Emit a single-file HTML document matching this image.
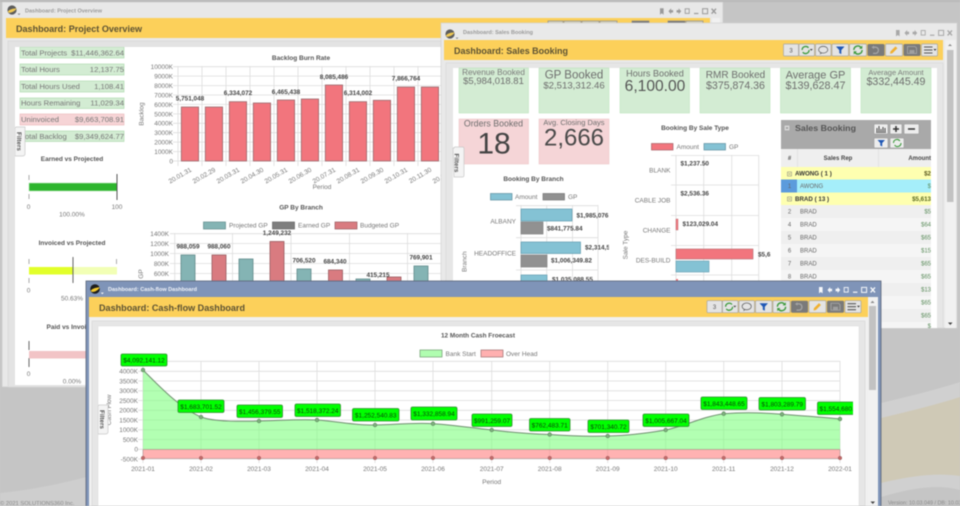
<!DOCTYPE html>
<html><head><meta charset="utf-8"><title>Dashboards</title>
<style>
html,body{margin:0;padding:0;width:960px;height:506px;overflow:hidden;background:#c6c6c6}
svg{display:block;filter:blur(.4px)}
text{font-family:"Liberation Sans",sans-serif}
.t{font-size:6.5px;fill:#777}
.r{text-anchor:end}
.m{text-anchor:middle}
.b{font-size:6.4px;font-weight:bold;fill:#444}
.h{font-size:6.5px;font-weight:bold;fill:#555;text-anchor:middle}
.g{stroke:#ddd;stroke-width:.8;fill:none}
.bt{font-size:5.6px;font-weight:bold}
.y{font-size:9.6px;font-weight:bold;fill:#5c5233}
.c{fill:#6e6e6e;text-anchor:middle}
.gl{fill:#00ff00;stroke:#2f8f2f;stroke-width:.8}
.gt{font-size:6.5px;fill:#0a4a0a;text-anchor:middle}
.st{font-size:7.7px;fill:#777}
.rw{font-size:6px;fill:#666}
.val{font-size:6px;fill:#5f8f5f;text-anchor:end}
</style></head>
<body>
<svg width="960" height="506" viewBox="0 0 960 506" xmlns="http://www.w3.org/2000/svg">
<defs>
<clipPath id="c1"><rect x="15" y="47" width="426" height="338"/></clipPath>
<clipPath id="c2a"><rect x="453" y="68" width="156" height="214"/></clipPath>
<clipPath id="c2b"><rect x="612" y="120" width="159" height="162"/></clipPath>
<clipPath id="c2g"><rect x="781" y="120" width="150" height="208"/></clipPath>
<clipPath id="c3l"><rect x="98" y="326" width="755" height="180"/></clipPath>
<g id="logo">
<circle cx="5" cy="5" r="4.6" fill="#3a3a3a"/>
<path d="M.8 6.6C3 4 6 3.6 9.6 3.4 8.4 5.8 4.5 8.2 1.6 7.6Z" fill="#f2c230"/>
<path d="M10.5 8.5h3l-1.5 1.6z" fill="#777"/>
</g>
<g id="tb">
<rect x="0" y="0" width="15" height="12" rx="1" fill="#e4e4e4" stroke="#a5a5a5" stroke-width=".7"/>
<text x="7.5" y="8.3" font-size="6" fill="#555" text-anchor="middle">3</text>
<rect x="15.5" y="0" width="15.5" height="12" rx="1" fill="#e4e4e4" stroke="#a5a5a5" stroke-width=".7"/>
<path d="M18.6 6a3.6 3.6 0 0 1 6.4-2.2M25.6 6a3.6 3.6 0 0 1-6.4 2.2" fill="none" stroke="#3d9a3d" stroke-width="1.3"/>
<path d="M26.3 5h3l-1.5 1.8z" fill="#444"/>
<rect x="32" y="0" width="15.5" height="12" rx="1" fill="#e4e4e4" stroke="#a5a5a5" stroke-width=".7"/>
<ellipse cx="39.7" cy="5.7" rx="4.6" ry="3.4" fill="none" stroke="#666" stroke-width=".8"/>
<path d="M37 8.5l-.8 2 2.5-1.4z" fill="#666"/>
<rect x="48.5" y="0" width="16.5" height="12" rx="1" fill="#e4e4e4" stroke="#a5a5a5" stroke-width=".7"/>
<path d="M52.5 2.5h8.5l-3.2 3.6v4l-2-1v-3z" fill="#1f57b5"/>
<rect x="66" y="0" width="17" height="12" rx="1" fill="#e4e4e4" stroke="#a5a5a5" stroke-width=".7"/>
<path d="M70.4 6a4 4 0 0 1 7.2-2.4M78.6 6a4 4 0 0 1-7.2 2.4" fill="none" stroke="#3d9a3d" stroke-width="1.4"/>
<path d="M78.8 1.5v3.2h-3.2zM70.2 10.5V7.3h3.2z" fill="#3d9a3d"/>
<rect x="84" y="0" width="17" height="12" rx="1.5" fill="#7a7a7a"/>
<path d="M90 3.2h2.5a3.2 3.2 0 0 1 0 6.2H89.5" fill="none" stroke="#a5a5a5" stroke-width="1.3"/>
<path d="M90.5 1.5v3.6L88 3.3z" fill="#a5a5a5"/>
<rect x="102" y="0" width="17" height="12" rx="1" fill="#e4e4e4" stroke="#a5a5a5" stroke-width=".7"/>
<path d="M106.5 9.8l.5-2.4 5-5 1.9 1.9-5 5z" fill="#f0b030"/>
<rect x="120" y="0" width="17" height="12" rx="1.5" fill="#7a7a7a"/>
<path d="M124 2.5h7.5l1.5 1.5v5.5h-9z" fill="none" stroke="#a0a0a0" stroke-width="1"/>
<rect x="126" y="6" width="5" height="3.5" fill="#a0a0a0"/>
<rect x="138" y="0" width="16" height="12" rx="1" fill="#e4e4e4" stroke="#a5a5a5" stroke-width=".7"/>
<path d="M140.5 3h8.5M140.5 6h8.5M140.5 9h8.5" stroke="#555" stroke-width="1.1"/>
<path d="M150 5h3l-1.5 1.8z" fill="#333"/>
</g>
<g id="wi">
<path d="M0 -3h3.6v6.4L1.8 2 0 3.4z"/>
<path d="M8.5 0l2.6-3v1.8h2v2.4h-2V3z"/>
<path d="M21.2 0l-2.6-3v1.8h-2v2.4h2V3z" transform="translate(0 0)"/>
<rect x="25.2" y="-2.5" width="4" height="4.6" fill="none" stroke-width=".9" style="stroke:inherit"/>
<rect x="34" y="1.6" width="4.4" height="1.2"/>
<rect x="42.6" y="-2.6" width="5" height="5" fill="none" stroke-width="1" style="stroke:inherit"/>
<path d="M51.6 -2.6l4.4 5M56 -2.6l-4.4 5" stroke-width="1.4" style="stroke:inherit"/>
</g>
</defs>

<!-- background -->
<rect width="960" height="506" fill="#c5c5c5"/>
<path d="M881 403C910 396 935 390 960 382V490C935 483 905 490 881 497Z" fill="#d0d0d0"/>
<path d="M881 418C910 411 935 405 960 397V476C935 472 905 477 881 483Z" fill="#cfc9b6"/>
<path d="M0 493C30 490 60 484 86 477V506H0Z" fill="#cecece"/>
<rect x="0" y="0" width="960" height="2" fill="#b9b9b9"/>
<text x="0" y="505" font-size="5.8" fill="#8a8a8a">© 2021 SOLUTIONS360 Inc.</text>
<text x="888" y="504.5" font-size="5.4" fill="#8a8a8a">Version: 10.03.049 / DB: 10.03.049</text>

<!-- WINDOW 1 -->
<rect x="2" y="2" width="721" height="385" fill="#e8e8e8" stroke="#c9c9c9" stroke-width=".6"/>
<use href="#logo" x="7" y="5" opacity=".8"/>
<text x="25" y="12.3" class="bt" fill="#9b9b9b" textLength="77" lengthAdjust="spacingAndGlyphs">Dashboard: Project Overview</text>
<g fill="#9a9a9a" stroke="#9a9a9a" stroke-width="0" transform="translate(660 11.3)"><use href="#wi"/></g>
<rect x="6" y="18" width="704" height="20" fill="#fcd05a"/>
<text x="16" y="32" class="y" textLength="126" lengthAdjust="spacingAndGlyphs">Dashboard: Project Overview</text>
<g fill="#d4d0bb" stroke="#8b8b8b" stroke-width=".7">
<rect x="548" y="21" width="15" height="6"/><rect x="564" y="21" width="17" height="6"/><rect x="582" y="21" width="17" height="6"/><rect x="600" y="21" width="17" height="6"/>
<rect x="632" y="21" width="17" height="6"/><rect x="668" y="21" width="17" height="6"/><rect x="686" y="21" width="17" height="6"/>
</g>
<rect x="632" y="21" width="17" height="6" fill="#7a7a7a"/><rect x="668" y="21" width="17" height="6" fill="#7a7a7a"/>
<rect x="712" y="18" width="8" height="8" fill="#f1f1f1"/>
<rect x="8" y="41" width="433" height="346" fill="#e3e3e3" stroke="#d6d6d6" stroke-width=".7"/>
<rect x="15" y="47" width="426" height="338" fill="#fff"/>
<g clip-path="url(#c1)">
<g fill="#d3ecd3" stroke="#a9d8a9" stroke-width=".6">
<rect x="20" y="47" width="104" height="11"/><rect x="20" y="64" width="104" height="11"/><rect x="20" y="81" width="104" height="11"/><rect x="20" y="98" width="104" height="10.5"/><rect x="20" y="131" width="104" height="10.5"/>
</g>
<rect x="20" y="114" width="104" height="11" fill="#f6d4d6" stroke="#eab6b8" stroke-width=".6"/>
<text x="21" y="55.5" class="st">Total Projects</text><text x="124" y="55.5" class="st r">$11,446,362.64</text>
<text x="21" y="72" class="st">Total Hours</text><text x="124" y="72" class="st r">12,137.75</text>
<text x="21" y="89" class="st">Total Hours Used</text><text x="124" y="89" class="st r">1,108.41</text>
<text x="21" y="105.5" class="st">Hours Remaining</text><text x="124" y="105.5" class="st r">11,029.34</text>
<text x="21" y="122" class="st">Uninvoiced</text><text x="124" y="122" class="st r">$9,663,708.91</text>
<text x="21" y="139" class="st">Total Backlog</text><text x="124" y="139" class="st r">$9,349,624.77</text>
<path d="M15 128.5q0-1.5 2-1.5h8v27q0 2-3 2h-7z" fill="#f4f4f4" stroke="#c8c8c8" stroke-width=".7"/>
<text transform="translate(17 132) rotate(90)" font-size="6.3" font-weight="bold" fill="#555">Filters</text>

<text x="72" y="161" class="h">Earned vs Projected</text>
<path d="M29 175v5M29 194v5" stroke="#888" stroke-width=".7"/>
<rect x="29" y="183" width="88" height="8" fill="#2db52d" stroke="#b6e6b6" stroke-width=".6"/>
<path d="M117 174v26" stroke="#555" stroke-width="1"/>
<text x="28.5" y="209" class="t m" font-size="6">0</text><text x="117" y="209" class="t m">100</text>
<text x="72" y="216.5" class="t m">100.00%</text>

<text x="72" y="245" class="h">Invoiced vs Projected</text>
<path d="M29 259v5M29 278v5M116.500 259v5" stroke="#888" stroke-width=".7"/>
<rect x="29" y="267" width="88" height="7.500" fill="#f2ffb5"/><rect x="29" y="267" width="44" height="7.500" fill="#e2ff2a"/>
<path d="M73 257v26" stroke="#666" stroke-width="1"/>
<text x="28.500" y="292.500" class="t m">0</text><text x="72" y="300.500" class="t m">50.63%</text>

<text x="72" y="329" class="h">Paid vs Invoiced</text>
<path d="M29 341v9M29 358v9" stroke="#666" stroke-width="1"/>
<rect x="29" y="351" width="88" height="7.500" fill="#f2c4c6"/>
<text x="28.500" y="376" class="t m">0</text><text x="72" y="383.500" class="t m">0.00%</text>

<!-- Backlog chart -->
<text x="301" y="60" class="h">Backlog Burn Rate</text>
<g class="g">
<path d="M173 66.700H441M173 76.100H441M173 85.600H441M173 95H441M173 104.400H441M173 113.900H441M173 123.300H441M173 132.700H441M173 142.100H441M173 151.600H441M173 161H441"/>
<path d="M178 66V166M202 66V166M226 66V166M250 66V166M274 66V166M298 66V166M322 66V166M346 66V166M370 66V166M394 66V166M418 66V166"/>
</g>
<g class="t r">
<text x="173" y="69">10000K</text><text x="173" y="78.500">9000K</text><text x="173" y="88">8000K</text><text x="173" y="97.400">7000K</text><text x="173" y="106.800">6000K</text><text x="173" y="116.300">5000K</text><text x="173" y="125.700">4000K</text><text x="173" y="135.100">3000K</text><text x="173" y="144.500">2000K</text><text x="173" y="154">1000K</text><text x="173" y="163.400">0</text>
</g>
<g fill="#f2757d" stroke="#9a6a6e" stroke-width=".8">
<rect x="181.300" y="107" width="17.300" height="54"/><rect x="205.300" y="107" width="17.300" height="54"/><rect x="229.300" y="101.700" width="17.300" height="59.300"/><rect x="253.300" y="103" width="17.300" height="58"/><rect x="277.300" y="100" width="17.300" height="61"/><rect x="301.300" y="99" width="17.300" height="62"/><rect x="325.300" y="85" width="17.300" height="76"/><rect x="349.300" y="101.700" width="17.300" height="59.300"/><rect x="373.300" y="100.300" width="17.300" height="60.700"/><rect x="397.300" y="87" width="17.300" height="74"/><rect x="421.300" y="87" width="17.300" height="74"/>
</g>
<g class="b m">
<text x="190" y="100.500">5,751,048</text><text x="238" y="95">6,334,072</text><text x="286" y="94">6,465,438</text><text x="334" y="79">8,085,486</text><text x="358" y="95">6,314,002</text><text x="406" y="80.500">7,866,764</text>
</g>
<g class="t r">
<text transform="translate(192 171) rotate(-30)">20.01.31</text><text transform="translate(216 171) rotate(-30)">20.02.29</text><text transform="translate(240 171) rotate(-30)">20.03.31</text><text transform="translate(264 171) rotate(-30)">20.04.30</text><text transform="translate(288 171) rotate(-30)">20.05.31</text><text transform="translate(312 171) rotate(-30)">20.06.30</text><text transform="translate(336 171) rotate(-30)">20.07.31</text><text transform="translate(360 171) rotate(-30)">20.08.31</text><text transform="translate(384 171) rotate(-30)">20.09.30</text><text transform="translate(408 171) rotate(-30)">20.10.31</text><text transform="translate(432 171) rotate(-30)">20.11.30</text><text transform="translate(456 171) rotate(-30)">20.12.31</text>
</g>
<text x="322" y="189" class="t m">Period</text>
<text transform="translate(143.500 114) rotate(-90)" class="t m">Backlog</text>

<!-- GP chart -->
<text x="301" y="209.500" class="h">GP By Branch</text>
<rect x="203.500" y="222" width="22" height="7" fill="#84b4b4" stroke="#5f8a8a" stroke-width=".7"/><text x="229" y="227.500" class="t">Projected GP</text>
<rect x="272.500" y="222" width="22" height="7" fill="#7e7e7e" stroke="#666" stroke-width=".7"/><text x="298" y="227.500" class="t">Earned GP</text>
<rect x="335" y="222" width="22" height="7" fill="#d97b80" stroke="#985a5e" stroke-width=".7"/><text x="360" y="227.500" class="t">Budgeted GP</text>
<g class="g">
<path d="M170 233.700H441M170 243.500H441M170 253.500H441M170 263.500H441M170 273.500H441M170 283.500H441"/>
<path d="M174.700 233V300M232.500 233V300M291 233V300M349.500 233V300M407.500 233V300"/>
</g>
<g class="t r">
<text x="169" y="236">1400K</text><text x="169" y="246">1200K</text><text x="169" y="256">1000K</text><text x="169" y="266">800K</text><text x="169" y="276">600K</text>
</g>
<text transform="translate(143 274) rotate(-90)" class="t m">GP</text>
<g stroke-width=".8">
<g fill="#84b4b4" stroke="#5f8a8a"><rect x="181" y="255" width="14" height="40"/><rect x="239" y="259" width="14" height="40"/><rect x="297" y="269" width="14" height="30"/><rect x="356" y="279" width="14" height="20"/><rect x="414" y="266" width="14" height="30"/></g>
<g fill="#d97b80" stroke="#985a5e"><rect x="212" y="255" width="14" height="40"/><rect x="270" y="241.500" width="14" height="50"/><rect x="328.500" y="270" width="14" height="30"/><rect x="387" y="277" width="14" height="20"/></g>
</g>
<g class="b m">
<text x="188" y="248.500">988,059</text><text x="219" y="248.500">988,060</text><text x="277" y="235">1,249,232</text><text x="304" y="262.500">706,520</text><text x="335" y="263.500">684,340</text><text x="378" y="277">415,215</text><text x="421" y="259.500">769,901</text>
</g>
</g>

<!-- WINDOW 2 -->
<rect x="441" y="23" width="516" height="305" fill="#e9e9e9" stroke="#d2d2d2" stroke-width=".7"/>
<use href="#logo" x="445" y="29" opacity=".8"/>
<text x="463" y="34.200" class="bt" fill="#9b9b9b" textLength="70" lengthAdjust="spacingAndGlyphs">Dashboard: Sales Booking</text>
<g fill="#a8a8a8" stroke="#a8a8a8" stroke-width="0" transform="translate(896 33)"><use href="#wi"/></g>
<rect x="444" y="40" width="499" height="20" fill="#fcd05a"/>
<text x="454" y="54" class="y" textLength="114" lengthAdjust="spacingAndGlyphs">Dashboard: Sales Booking</text>
<use href="#tb" x="783.500" y="44"/>
<rect x="945" y="40" width="11" height="288" fill="#f1f1f1"/>
<rect x="947" y="50" width="6.500" height="152" fill="#c2c2c2"/>
<path d="M948 46l2-2 2 2z" fill="#888"/><path d="M948 322.500h4.500l-2.200 2.500z" fill="#444"/>
<rect x="446" y="63" width="497" height="265" fill="#e6e6e6" stroke="#d8d8d8" stroke-width=".7"/>
<rect x="453" y="68" width="484" height="260" fill="#fff"/>

<g fill="#d3ecd3" stroke="#b5e0b5" stroke-width=".5">
<rect x="459" y="68" width="69.500" height="45"/><rect x="539" y="68" width="70" height="45"/><rect x="620" y="68" width="69.500" height="45"/><rect x="700" y="68" width="70" height="45"/><rect x="780.500" y="68" width="70" height="45"/><rect x="861" y="68" width="70" height="45"/>
</g>
<g fill="#f5d5d7" stroke="#ecc0c2" stroke-width=".5">
<rect x="459" y="119" width="69.500" height="45"/><rect x="539" y="119" width="70" height="45"/>
</g>
<text x="493.500" y="75" font-size="8.200" fill="#7b7b7b" class="m">Revenue Booked</text>
<text x="493.500" y="84" font-size="9.500" class="c">$5,984,018.81</text>
<text x="574" y="78.500" font-size="11.500" class="c">GP Booked</text>
<text x="574" y="88.500" font-size="9.600" class="c">$2,513,312.46</text>
<text x="655" y="76.500" font-size="9.100" class="c">Hours Booked</text>
<text x="655" y="91" font-size="15.600" fill="#555" text-anchor="middle">6,100.00</text>
<text x="735.500" y="78" font-size="10" class="c">RMR Booked</text>
<text x="735.500" y="89" font-size="10.600" class="c">$375,874.36</text>
<text x="815.500" y="78.500" font-size="11" class="c">Average GP</text>
<text x="815.500" y="89" font-size="10.800" class="c">$139,628.47</text>
<text x="896" y="75" font-size="7.500" fill="#7b7b7b" class="m">Average Amount</text>
<text x="896" y="85" font-size="10.600" class="c">$332,445.49</text>
<text x="493.500" y="126.500" font-size="8.800" class="c">Orders Booked</text>
<text x="494" y="153.500" font-size="30" fill="#444" text-anchor="middle">18</text>
<text x="574" y="125" font-size="7.500" class="c">Avg. Closing Days</text>
<text x="574" y="145.500" font-size="24" fill="#4a4a4a" text-anchor="middle">2,666</text>

<path d="M453 148h1v.5q0-1.500 1-1.500h7.500q1.500 0 1.500 1.500v27q0 1.500-2 1.500h-8z" fill="#f4f4f4" stroke="#c8c8c8" stroke-width=".7"/>
<text transform="translate(454.500 153.500) rotate(90)" font-size="6.300" font-weight="bold" fill="#555">Filters</text>

<!-- booking by branch -->
<g clip-path="url(#c2a)">
<text x="533.500" y="181" class="h">Booking By Branch</text>
<rect x="490.500" y="193.500" width="21.500" height="6.500" fill="#84c2d4" stroke="#5f8fa0" stroke-width=".7"/><text x="515" y="198.800" class="t">Amount</text>
<rect x="543" y="193.500" width="21.500" height="6.500" fill="#919191" stroke="#777" stroke-width=".7"/><text x="568" y="198.800" class="t">GP</text>
<g class="g"><path d="M516 205.700H598M516 237.700H598M516 270H598M521 205V282M546.700 205V282M572.500 205V282M598 205V282"/></g>
<g stroke-width=".7">
<g fill="#84c2d4" stroke="#5f9aae"><rect x="521" y="209" width="51" height="12"/><rect x="521" y="242" width="59.500" height="11.500"/><rect x="521" y="275" width="26" height="10"/></g>
<g fill="#919191" stroke="#808080"><rect x="521" y="222" width="22" height="12"/><rect x="521" y="255" width="26" height="12"/></g>
</g>
<g class="b">
<text x="576.500" y="217.500">$1,985,076.30</text><text x="547" y="230.500">$841,775.84</text><text x="585" y="249.500">$2,314,589.10</text><text x="551" y="262.500">$1,006,349.82</text><text x="552" y="281.500">$1,035,088.55</text>
</g>
<text x="516" y="223.500" class="t r">ALBANY</text><text x="516" y="255.500" class="t r">HEADOFFICE</text>
<text transform="translate(466.500 272) rotate(-90)" class="t">Branch</text>
</g>

<!-- booking by sale type -->
<g clip-path="url(#c2b)">
<text x="695" y="130" class="h">Booking By Sale Type</text>
<rect x="651.500" y="143.500" width="21.500" height="6.500" fill="#f2757d" stroke="#a56065" stroke-width=".7"/><text x="676.500" y="148.800" class="t">Amount</text>
<rect x="704" y="143.500" width="21.500" height="6.500" fill="#84c2d4" stroke="#5f8fa0" stroke-width=".7"/><text x="729" y="148.800" class="t">GP</text>
<g class="g"><path d="M671 155.500H758.700M671 185H758.700M671 215.500H758.700M671 245.500H758.700M671 275H758.700M676 155V282M703.700 155V282M731.700 155V282M758.700 155V282"/></g>
<rect x="676" y="219" width="2" height="11" fill="#f2757d" stroke="#b36a6e" stroke-width=".4"/>
<rect x="676" y="249" width="77" height="10" fill="#f2757d" stroke="#b36a6e" stroke-width=".6"/>
<rect x="676" y="261" width="33" height="11" fill="#84c2d4" stroke="#5f9aae" stroke-width=".6"/>
<rect x="676" y="279" width="2" height="5" fill="#f2757d"/>
<g class="b">
<text x="680.500" y="165.500">$1,237.50</text><text x="680.500" y="195.500">$2,536.36</text><text x="682.500" y="226">$123,029.04</text><text x="758" y="256.500">$5,613,742</text>
</g>
<g class="t r"><text x="670.500" y="172.300">BLANK</text><text x="670.500" y="202.300">CABLE JOB</text><text x="670.500" y="232.300">CHANGE</text><text x="670.500" y="262.300">DES-BUILD</text></g>
<text transform="translate(627.500 245) rotate(-90)" class="t m">Sale Type</text>
</g>

<!-- grid -->
<g clip-path="url(#c2g)">
<rect x="781" y="120" width="150" height="29" fill="#a9a9a9"/>
<rect x="785" y="126" width="4" height="4" fill="#ccc" stroke="#eee" stroke-width=".5"/><path d="M786 128h2" stroke="#666" stroke-width=".6"/>
<text x="795" y="131" font-size="8.500" font-weight="bold" fill="#555" textLength="61" lengthAdjust="spacingAndGlyphs">Sales Booking</text>
<g fill="#ededed" stroke="#8f8f8f" stroke-width=".5">
<rect x="874" y="124" width="14" height="10" rx="1"/><rect x="890" y="124" width="12" height="10" rx="1"/><rect x="904" y="124" width="15" height="10" rx="1"/><rect x="874" y="138" width="14" height="10" rx="1"/><rect x="890" y="138" width="14" height="10" rx="1"/>
</g>
<path d="M877 132v-4M879 132v-6M881 132v-3M883 132v-5M885 132v-4" stroke="#333" stroke-width=".9"/><path d="M876 132.500h10" stroke="#333" stroke-width=".6"/>
<path d="M893 129h6M896 126v6" stroke="#333" stroke-width="1.500"/><path d="M908 129h7" stroke="#333" stroke-width="1.500"/>
<path d="M877.500 140h7.500l-2.800 3v3.500l-1.900-1v-2.500z" fill="#1f57b5"/>
<path d="M893.500 143a3.500 3.500 0 0 1 6.400-2M901 143a3.500 3.500 0 0 1-6.400 2" fill="none" stroke="#3d9a3d" stroke-width="1.100"/>
<rect x="781" y="149" width="150" height="18" fill="#efefef"/>
<path d="M797.500 149v18M878.500 149v18" stroke="#dedede" stroke-width=".7"/>
<text x="789.500" y="160" font-size="6" font-weight="bold" fill="#555" text-anchor="middle">#</text>
<text x="838" y="160" font-size="6" font-weight="bold" fill="#444" text-anchor="middle">Sales Rep</text>
<text x="931" y="160" font-size="6" font-weight="bold" fill="#444" text-anchor="end">Amount</text>
<rect x="781" y="167" width="150" height="12.500" fill="#feffb0"/>
<rect x="781" y="179.500" width="150" height="13" fill="#a5eefa"/><rect x="781" y="179.500" width="16" height="13" fill="#5c9bdc"/>
<rect x="781" y="192.500" width="150" height="12.500" fill="#feffb0"/>
<g fill="#efefef"><rect x="781" y="205" width="150" height="13"/><rect x="781" y="231" width="150" height="13"/><rect x="781" y="257" width="150" height="13"/><rect x="781" y="283" width="150" height="13"/><rect x="781" y="309" width="150" height="13"/></g>
<g fill="#f5f5f5"><rect x="781" y="218" width="150" height="13"/><rect x="781" y="244" width="150" height="13"/><rect x="781" y="270" width="150" height="13"/><rect x="781" y="296" width="150" height="13"/><rect x="781" y="322" width="150" height="8"/></g>
<g fill="none" stroke="#777" stroke-width=".5"><rect x="787.500" y="172" width="4" height="4"/><rect x="787.500" y="197" width="4" height="4"/></g>
<path d="M788.500 174h2M788.500 199h2" stroke="#555" stroke-width=".5"/>
<text x="795" y="175.300" font-size="6.200" font-weight="bold" fill="#333">AWONG ( 1 )</text>
<text x="931" y="175.300" font-size="6.200" font-weight="bold" fill="#5a5a20" text-anchor="end">$2</text>
<text x="789.500" y="188" class="rw m">1</text><text x="800" y="188" class="rw">AWONG</text><text x="931" y="188" class="val">$</text>
<text x="795" y="201" font-size="6.200" font-weight="bold" fill="#333">BRAD ( 13 )</text>
<text x="931" y="201" font-size="6.200" font-weight="bold" fill="#5a6a20" text-anchor="end">$5,613</text>
<g class="rw">
<text x="789.500" y="213.500" text-anchor="middle">2</text><text x="800" y="213.500">BRAD</text>
<text x="789.500" y="226.500" text-anchor="middle">4</text><text x="800" y="226.500">BRAD</text>
<text x="789.500" y="239.500" text-anchor="middle">5</text><text x="800" y="239.500">BRAD</text>
<text x="789.500" y="252.500" text-anchor="middle">6</text><text x="800" y="252.500">BRAD</text>
<text x="789.500" y="265.500" text-anchor="middle">7</text><text x="800" y="265.500">BRAD</text>
<text x="789.500" y="278.500" text-anchor="middle">8</text><text x="800" y="278.500">BRAD</text>
</g>
<text x="931" y="213.500" class="val">$5</text><text x="931" y="226.500" class="val">$64</text><text x="931" y="239.500" class="val">$65</text><text x="931" y="252.500" class="val">$15</text><text x="931" y="265.500" class="val">$65</text><text x="931" y="278.500" class="val">$65</text><text x="931" y="291.500" class="val">$13</text><text x="931" y="304.500" class="val">$65</text><text x="931" y="317.500" class="val">$65</text><text x="931" y="328" class="val">$</text>
</g>

<!-- WINDOW 3 -->
<rect x="86" y="281" width="795" height="226" fill="#7f94b8" stroke="#5a6478" stroke-width=".8"/>
<g transform="translate(90 284)"><circle cx="5" cy="5" r="4.800" fill="#1d1d1d"/><path d="M.6 6.800C3 4 6 3.600 9.800 3.200 8.500 6 4.500 8.400 1.600 7.800Z" fill="#f4c92f"/><path d="M10.800 8.600h3l-1.500 1.600z" fill="#fff"/></g>
<text x="108" y="290.800" class="bt" fill="#f1f4f9" textLength="89" lengthAdjust="spacingAndGlyphs">Dashboard: Cash-flow Dashboard</text>
<g fill="#f6f8fb" stroke="#f6f8fb" stroke-width="0" transform="translate(819 290)"><use href="#wi"/></g>
<rect x="89" y="297" width="789" height="209" fill="#f0f0f0"/>
<rect x="89" y="297" width="779" height="20" fill="#fcd05a"/>
<text x="99" y="311" class="y" textLength="146" lengthAdjust="spacingAndGlyphs">Dashboard: Cash-flow Dashboard</text>
<use href="#tb" x="707" y="300.700"/>
<rect x="868" y="297" width="10" height="209" fill="#f1f1f1"/>
<rect x="869" y="306" width="7" height="84" fill="#c2c2c2"/>
<path d="M870.500 303l2-2.200 2 2.200z" fill="#888"/><path d="M870.500 501.500h4.500l-2.200 2.500z" fill="#444"/>
<rect x="92" y="321" width="773" height="185" fill="#e6e6e6" stroke="#d8d8d8" stroke-width=".7"/>
<rect x="98" y="326" width="761" height="180" fill="#fff" stroke="#dcdcdc" stroke-width=".5"/>

<g clip-path="url(#c3l)">
<text x="478" y="337.500" class="h" fill="#555" textLength="74" lengthAdjust="spacingAndGlyphs">12 Month Cash Froecast</text>
<rect x="420" y="350" width="22" height="7" fill="#b0fdb0" stroke="#6f9a6f" stroke-width=".7"/><text x="445.500" y="355.800" class="t">Bank Start</text>
<rect x="481" y="350" width="22" height="7" fill="#ffb0b0" stroke="#a07070" stroke-width=".7"/><text x="506" y="355.800" class="t">Over Head</text>
<g stroke="#dcdcdc" stroke-width=".8" fill="none">
<path d="M138 361.300H840M138 371.300H840M138 381H840M138 390.800H840M138 400.500H840M138 410.300H840M138 420H840M138 429.800H840M138 439.500H840M138 449.300H840M138 459H840"/>
<path d="M143 361V463M201 361V463M259 361V463M317 361V463M375 361V463M433 361V463M491.700 361V463M549.700 361V463M607.700 361V463M665.700 361V463M723.700 361V463M782 361V463M840 361V463"/>
</g>
<path d="M143 370C160 387 180 408 201 417C215 422 240 421.500 259 421C280 420.500 300 419 317 420C340 421.500 355 425.500 375 425C395 424.500 415 422.500 433 423.700C455 425 472 428 491.700 430C512 432.500 530 434 549.700 434.500C570 436 590 436.500 607.700 436C628 435.500 645 433.500 665.700 430C685 426 703 416.500 723.700 413.700C745 412 762 412.500 782 414.300C802 416 822 417 840 419V449.500H143Z" fill="#7fff7f" fill-opacity=".6"/>
<path d="M143 370C160 387 180 408 201 417C215 422 240 421.500 259 421C280 420.500 300 419 317 420C340 421.500 355 425.500 375 425C395 424.500 415 422.500 433 423.700C455 425 472 428 491.700 430C512 432.500 530 434 549.700 434.500C570 436 590 436.500 607.700 436C628 435.500 645 433.500 665.700 430C685 426 703 416.500 723.700 413.700C745 412 762 412.500 782 414.300C802 416 822 417 840 419" fill="none" stroke="#6f8f6f" stroke-width="1"/>
<rect x="143" y="449.500" width="697" height="9" fill="#ff7f7f" fill-opacity=".6" stroke="#a88" stroke-width=".5"/>
<g fill="#7fb07f" stroke="#5f8f5f" stroke-width=".7">
<circle cx="143" cy="370" r="1.800"/><circle cx="201" cy="417" r="1.800"/><circle cx="259" cy="421" r="1.800"/><circle cx="317" cy="420" r="1.800"/><circle cx="375" cy="425" r="1.800"/><circle cx="433" cy="423.700" r="1.800"/><circle cx="491.700" cy="430" r="1.800"/><circle cx="549.700" cy="434.500" r="1.800"/><circle cx="607.700" cy="436" r="1.800"/><circle cx="665.700" cy="430" r="1.800"/><circle cx="723.700" cy="413.700" r="1.800"/><circle cx="782" cy="414.300" r="1.800"/><circle cx="840" cy="419" r="1.800"/>
</g>
<g fill="#c26a6a" stroke="#a05a5a" stroke-width=".5">
<circle cx="143" cy="458" r="1.800"/><circle cx="201" cy="458" r="1.800"/><circle cx="259" cy="458" r="1.800"/><circle cx="317" cy="458" r="1.800"/><circle cx="375" cy="458" r="1.800"/><circle cx="433" cy="458" r="1.800"/><circle cx="491.700" cy="458" r="1.800"/><circle cx="549.700" cy="458" r="1.800"/><circle cx="607.700" cy="458" r="1.800"/><circle cx="665.700" cy="458" r="1.800"/><circle cx="723.700" cy="458" r="1.800"/><circle cx="782" cy="458" r="1.800"/><circle cx="840" cy="458" r="1.800"/>
</g>
<g class="t r">
<text x="138" y="373.600">4000K</text><text x="138" y="383.300">3500K</text><text x="138" y="393.100">3000K</text><text x="138" y="402.800">2500K</text><text x="138" y="412.600">2000K</text><text x="138" y="422.300">1500K</text><text x="138" y="432.100">1000K</text><text x="138" y="441.800">500K</text><text x="138" y="451.600">0</text><text x="138" y="461.300">-500K</text>
</g>
<g class="t m">
<text x="143" y="470.800">2021-01</text><text x="201" y="470.800">2021-02</text><text x="259" y="470.800">2021-03</text><text x="317" y="470.800">2021-04</text><text x="375" y="470.800">2021-05</text><text x="433" y="470.800">2021-06</text><text x="491.700" y="470.800">2021-07</text><text x="549.700" y="470.800">2021-08</text><text x="607.700" y="470.800">2021-09</text><text x="665.700" y="470.800">2021-10</text><text x="723.700" y="470.800">2021-11</text><text x="782" y="470.800">2021-12</text><text x="840" y="470.800">2022-01</text>
<text x="491.700" y="483.800">Period</text>
</g>
<g>
<rect x="121" y="354" width="46" height="12" rx="1.500" class="gl"/><text x="144" y="362.500" class="gt">$4,092,141.12</text>
<rect x="178" y="400" width="46" height="12.500" rx="1.500" class="gl"/><text x="201" y="408.800" class="gt">$1,683,701.52</text>
<rect x="237" y="405" width="45.500" height="12.500" rx="1.500" class="gl"/><text x="259.700" y="413.800" class="gt">$1,456,379.55</text>
<rect x="295" y="404" width="45.500" height="12.500" rx="1.500" class="gl"/><text x="317.700" y="412.800" class="gt">$1,518,372.24</text>
<rect x="352.500" y="408.500" width="46.500" height="12.500" rx="1.500" class="gl"/><text x="375.700" y="417.300" class="gt">$1,252,540.83</text>
<rect x="411" y="407" width="46" height="13" rx="1.500" class="gl"/><text x="434" y="416" class="gt">$1,332,858.94</text>
<rect x="472" y="414" width="40" height="12.500" rx="1.500" class="gl"/><text x="492" y="422.800" class="gt">$991,259.07</text>
<rect x="529.500" y="418.500" width="40.500" height="12.500" rx="1.500" class="gl"/><text x="549.700" y="427.300" class="gt">$762,483.71</text>
<rect x="588" y="420" width="41" height="12.500" rx="1.500" class="gl"/><text x="608.500" y="428.800" class="gt">$701,340.72</text>
<rect x="643" y="414" width="46" height="12.500" rx="1.500" class="gl"/><text x="666" y="422.800" class="gt">$1,005,667.04</text>
<rect x="701" y="397" width="46" height="12.500" rx="1.500" class="gl"/><text x="724" y="405.800" class="gt">$1,843,448.65</text>
<rect x="759" y="397.500" width="46.500" height="12.500" rx="1.500" class="gl"/><text x="782.200" y="406.300" class="gt">$1,803,289.79</text>
<rect x="817.500" y="402" width="40" height="12.500" rx="1.500" class="gl"/><text x="819.500" y="410.800" class="gt" style="text-anchor:start">$1,554,680.</text>
</g>
<text transform="translate(111 410) rotate(-90)" class="t m">Cash Flow</text>
<path d="M98 406.500q0-1.500 2-1.500h8v27q0 2-3 2h-7z" fill="#f4f4f4" stroke="#c8c8c8" stroke-width=".7"/>
<text transform="translate(100 410) rotate(90)" font-size="6.300" font-weight="bold" fill="#555">Filters</text>
</g>
</svg>
</body></html>
